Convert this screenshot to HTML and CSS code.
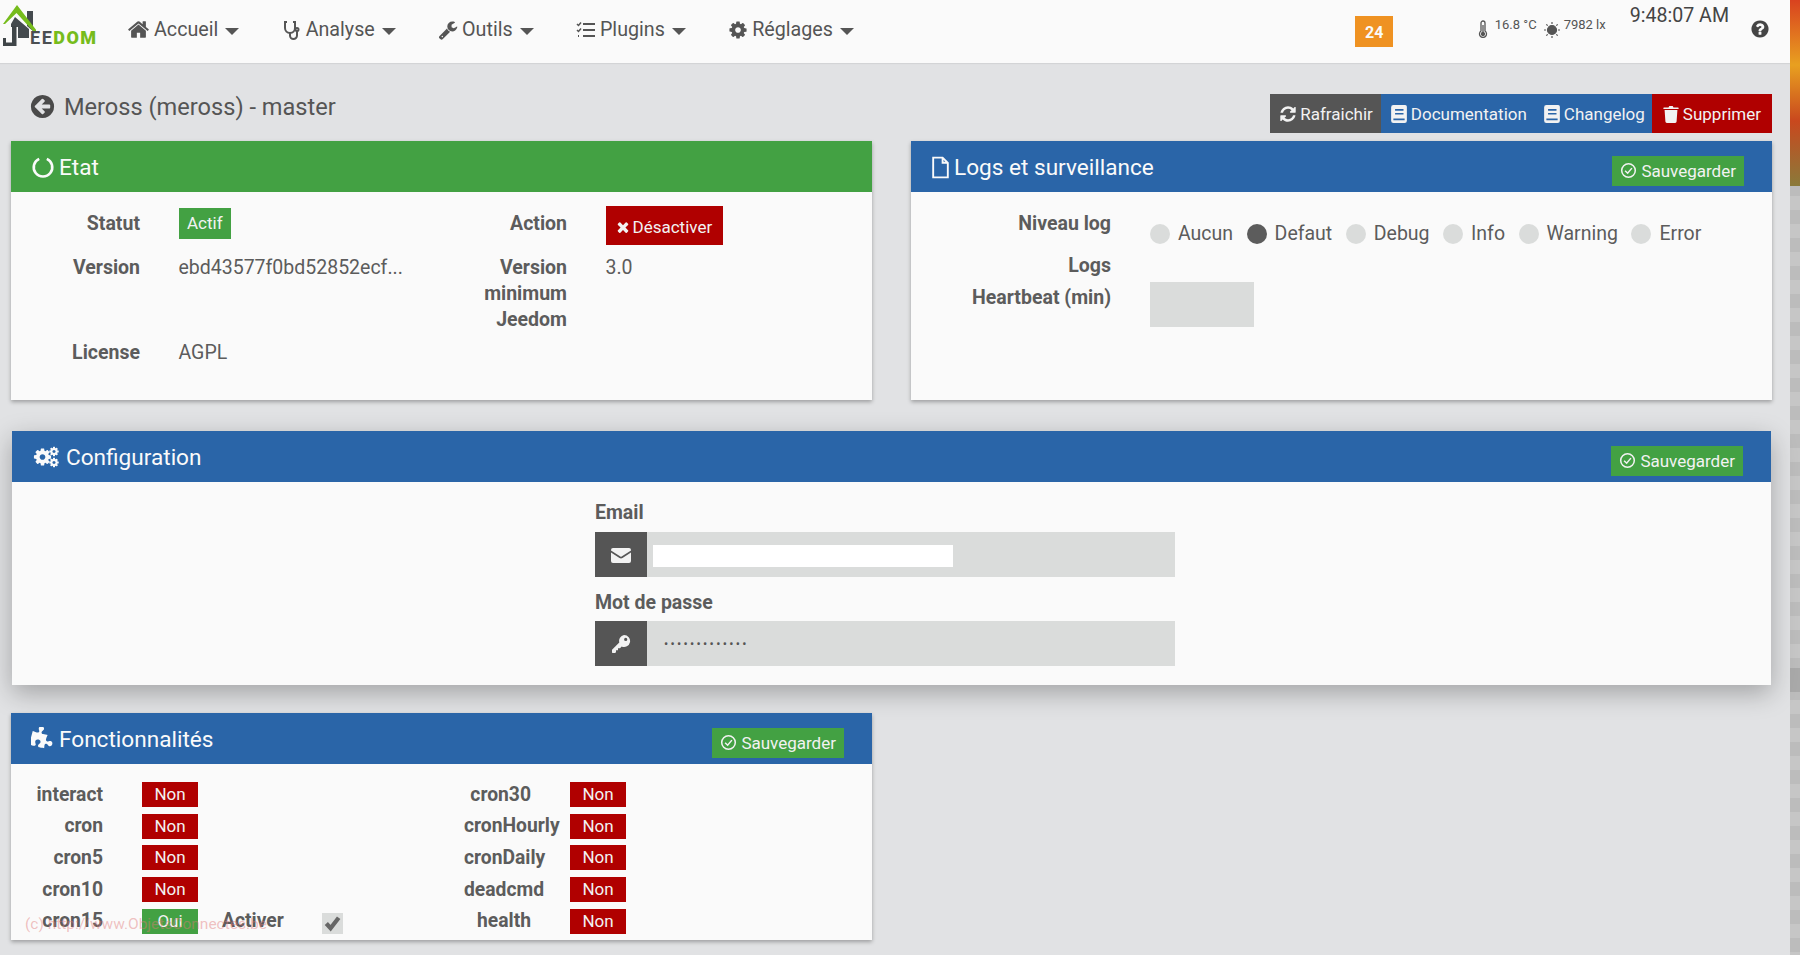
FILE: index.html
```html
<!DOCTYPE html>
<html lang="fr">
<head>
    <meta charset="UTF-8">
    <meta name="viewport" content="width=device-width, initial-scale=1.0">
    <title>Meross - Jeedom</title>
    <link rel="stylesheet" href="styles.css">
</head>
<body>
    <svg class="sprite" xmlns="http://www.w3.org/2000/svg">
        <symbol id="i-home" viewBox="0 0 1792 1792"><path d="M1472 992v480q0 26-19 45t-45 19h-384v-384h-256v384h-384q-26 0-45-19t-19-45v-480q0-1 .5-3t.5-3l575-474 575 474q1 2 1 6zm223-69l-62 74q-8 9-21 11h-3q-13 0-21-7l-692-577-692 577q-12 8-24 7-13-2-21-11l-62-74q-8-10-7-23.500t11-21.500l719-599q32-26 76-26t76 26l244 204v-195q0-14 9-23t23-9h192q14 0 23 9t9 23v408l219 182q10 8 11 21.500t-7 23.500z"/></symbol>
        <symbol id="i-wrench" viewBox="0 0 1792 1792"><path d="M448 1472q0-26-19-45t-45-19-45 19-19 45 19 45 45 19 45-19 19-45zm644-420l-682 682q-37 37-90 37-52 0-91-37l-106-108q-38-36-38-90 0-53 38-91l681-681q39 98 114.500 173.500t173.500 114.500zm634-435q0 39-23 106-47 134-164.500 217.500t-258.500 83.500q-185 0-316.500-131.500t-131.500-316.500 131.500-316.500 316.500-131.500q58 0 121.500 16.500t107.500 46.500q16 11 16 28t-16 28l-293 169v224l193 107q5-3 79-48.500t135.500-81 70.500-35.500q15 0 23.500 10t8.500 25z"/></symbol>
        <symbol id="i-cog" viewBox="0 0 1792 1792"><path d="M1152 896q0-106-75-181t-181-75-181 75-75 181 75 181 181 75 181-75 75-181zm512-109v222q0 12-8 23t-20 13l-185 28q-19 54-39 91 35 50 107 138 10 12 10 25t-9 23q-27 37-99 108t-94 71q-12 0-26-9l-138-108q-44 23-91 38-16 136-29 186-7 28-36 28h-222q-14 0-24.500-8.500t-11.500-21.500l-28-184q-49-16-90-37l-141 107q-10 9-25 9-14 0-25-11-126-114-165-168-7-10-7-23 0-12 8-23 15-21 51-66.500t54-70.500q-27-50-41-99l-183-27q-13-2-21-12.500t-8-23.500v-222q0-12 8-23t19-13l186-28q14-46 39-92-40-57-107-138-10-12-10-24 0-10 9-23 26-36 98.500-107.500t94.500-71.500q13 0 26 10l138 107q44-23 91-38 16-136 29-186 7-28 36-28h222q14 0 24.500 8.500t11.500 21.500l28 184q49 16 90 37l142-107q9-9 24-9 13 0 25 10 129 119 165 170 7 8 7 22 0 12-8 23-15 21-51 66.500t-54 70.500q26 50 41 98l183 28q13 2 21 12.500t8 23.500z"/></symbol>
        <symbol id="i-question" viewBox="0 0 1792 1792"><path d="M1024 1376v-192q0-14-9-23t-23-9h-192q-14 0-23 9t-9 23v192q0 14 9 23t23 9h192q14 0 23-9t9-23zm256-672q0-88-55.500-163t-138.500-116-170-41q-243 0-371 213-15 24 8 42l132 100q7 6 19 6 16 0 25-12 53-68 86-92 34-24 86-24 48 0 85.500 26t37.500 59q0 38-20 61t-68 45q-63 28-115.500 86.500t-52.500 125.500v36q0 14 9 23t23 9h192q14 0 23-9t9-23q0-19 21.500-49.500t54.500-49.500q32-18 49-28.500t46-35 44.500-48 28-60.500 12.500-81zm384 192q0 209-103 385.500t-279.500 279.500-385.500 103-385.500-103-279.500-279.500-103-385.500 103-385.500 279.500-279.500 385.500-103 385.500 103 279.500 279.500 103 385.500z"/></symbol>
        <symbol id="i-back" viewBox="0 0 1792 1792"><path d="M1408 960v-128q0-26-19-45t-45-19h-502l189-189q19-19 19-45t-19-45l-91-91q-18-18-45-18t-45 18l-362 362-91 91q-18 18-18 45t18 45l91 91 362 362q18 18 45 18t45-18l91-91q18-18 18-45t-18-45l-189-189h502q26 0 45-19t19-45zm256-64q0 209-103 385.500t-279.500 279.500-385.500 103-385.500-103-279.500-279.500-103-385.500 103-385.500 279.500-279.500 385.500-103 385.500 103 279.500 279.500 103 385.500z"/></symbol>
        <symbol id="i-refresh" viewBox="0 0 1792 1792"><path d="M1639 1056q0 5-1 7-64 268-268 434.500t-478 166.500q-146 0-282.500-55t-243.500-157l-129 129q-19 19-45 19t-45-19-19-45v-448q0-26 19-45t45-19h448q26 0 45 19t19 45-19 45l-137 137q71 66 161 102t187 36q134 0 250-65t186-179q11-17 53-117 8-23 30-23h192q13 0 22.500 9.500t9.500 22.500zm25-800v448q0 26-19 45t-45 19h-448q-26 0-45-19t-19-45 19-45l138-138q-148-137-349-137-134 0-250 65t-186 179q-11 17-53 117-8 23-30 23h-199q-13 0-22.500-9.500t-9.500-22.500v-7q65-268 270-434.500t480-166.500q146 0 284 55.500t245 156.500l130-129q19-19 45-19t45 19 19 45z"/></symbol>
        <symbol id="i-trash" viewBox="0 0 16 18"><path d="M1 2.500h4.500L6.300 1h3.400l.8 1.500H15a.6.6 0 0 1 .6.600v.9H.4v-.9A.6.6 0 0 1 1 2.500z"/><path d="M1.600 5h12.800l-.8 11.500a1.500 1.500 0 0 1-1.500 1.400H3.900a1.500 1.500 0 0 1-1.500-1.400z"/></symbol>
        <symbol id="i-times" viewBox="0 0 1792 1792"><path d="M1490 1322q0 40-28 68l-136 136q-28 28-68 28t-68-28l-294-294-294 294q-28 28-68 28t-68-28l-136-136q-28-28-28-68t28-68l294-294-294-294q-28-28-28-68t28-68l136-136q28-28 68-28t68 28l294 294 294-294q28-28 68-28t68 28l136 136q28 28 28 68t-28 68l-294 294 294 294q28 28 28 68z"/></symbol>
        <symbol id="i-envelope" viewBox="0 0 20 16"><path d="M0 5.500V14a2 2 0 0 0 2 2h16a2 2 0 0 0 2-2V5.500l-8.500 5.500a3 3 0 0 1-3 0z"/><path d="M0 3a2 2 0 0 1 2-2h16a2 2 0 0 1 2 2v.5L10.600 9.500a1 1 0 0 1-1.200 0L0 3.500z"/></symbol>
        <symbol id="i-key" viewBox="0 0 20 20"><path fill-rule="evenodd" d="M13 1a6 6 0 1 1-2.300 11.500L9 14.200H7v2H5v2l-1 .8H1.500L1 18.500V15.800l7.300-7.300A6 6 0 0 1 13 1zM14.700 3.800a1.600 1.600 0 1 0 0 3.200 1.600 1.600 0 0 0 0-3.200z"/></symbol>
        <symbol id="i-puzzle" viewBox="0 0 1792 1792"><path transform="rotate(15 896 896)" d="M1664 1098q0 81-44.500 135t-123.500 54q-41 0-77.500-17.500t-59-38-56.500-38-71-17.500q-110 0-110 124 0 39 16 115t15 115v5q-22 0-33 1-34 3-97.500 11.500t-115.500 13.500-98 5q-61 0-103-26.500t-42-83.500q0-37 17.500-71t38-56.500 38-59 17.500-77.500q0-79-54-123.500t-135-44.500q-84 0-143 45.500t-59 127.500q0 43 15 83t33.500 64.500 33.500 53 15 50.500q0 45-46 89-37 35-117 35-95 0-245-24-9-2-27.500-4t-27.500-4l-13-2q-1 0-3-1-2 0-2-1v-1024q2 1 17.500 3.500t34 5 21.500 3.500q150 24 245 24 80 0 117-35 46-44 46-89 0-22-15-50.500t-33.500-53-33.500-64.500-15-83q0-82 59-127.500t144-45.500q80 0 134 44.500t54 123.500q0 41-17.500 77.500t-38 59-38 56.500-17.500 71q0 57 42 83.500t103 26.500q64 0 180-15t163-17v2q-1 2-3.500 17.500t-5 34-3.500 21.500q-24 150-24 245 0 80 35 117 44 46 89 46 22 0 50.500-15t53-33.500 64.500-33.500 83-15q82 0 127.500 59t45.500 143z"/></symbol>
        <symbol id="i-book" viewBox="0 0 16 16"><path fill-rule="evenodd" d="M3 0h10.500A1.500 1.500 0 0 1 15 1.500V14a2 2 0 0 1-2 2H3a2 2 0 0 1-2-2V2a2 2 0 0 1 2-2zM4.500 3.500v1.500h7.500V3.500zM4.500 7v1.500h7.500V7zM3 12v1.500h10V12z"/></symbol>
        <symbol id="i-check" viewBox="0 0 20 20"><circle cx="10" cy="10" r="8" fill="none" stroke="currentColor" stroke-width="1.800"/><path d="M6 10.200l3 3 5-6" fill="none" stroke="currentColor" stroke-width="1.800"/></symbol>
    </svg>

    <div class="app">
        <div class="page">
            <header class="topbar">
                <a class="logo">
                    <svg class="logo-house" viewBox="0 0 36 50" width="36" height="50">
                        <path d="M15 16 29 28V37H18V26H11V23z" fill="#444a4e"/>
                        <path d="M27 10h6v20l-6-5z" fill="#444a4e"/>
                        <path d="M12 25h4.500v20H3v-8h3v4.500h6z" fill="#3f4548"/>
                        <path d="M17 4 37 30h-4L16.500 12 5 23H3z" fill="#76bc1c"/>
                    </svg>
                    <span class="logo-text">EE<b>DOM</b></span>
                </a>
                <nav class="menu">
                    <a class="menu-item"><svg class="menu-icon icon-home"><use href="#i-home"/></svg>Accueil<i class="caret"></i></a>
                    <a class="menu-item">
                        <svg class="menu-icon" viewBox="0 0 20 20" fill="none" stroke="currentColor" stroke-width="2">
                            <path d="M5 2H3v6a5 5 0 0 0 10 0V2h-2"/>
                            <path d="M8 13v2.500a3.500 3.500 0 0 0 7 0V11"/>
                            <circle cx="15" cy="9.500" r="1.500"/>
                        </svg>Analyse<i class="caret"></i></a>
                    <a class="menu-item"><svg class="menu-icon"><use href="#i-wrench"/></svg>Outils<i class="caret"></i></a>
                    <a class="menu-item">
                        <svg class="menu-icon" viewBox="0 0 20 20" fill="none" stroke="currentColor">
                            <path d="M1 4l1.500 1.500L5 2.500M1 10l1.500 1.500L5 8.500" stroke-width="1.500"/>
                            <path d="M2 16h2" stroke-width="2" stroke-dasharray="1 1"/>
                            <path d="M7 4h12M7 10h12M7 16h12" stroke-width="2.200"/>
                        </svg>Plugins<i class="caret"></i></a>
                    <a class="menu-item"><svg class="menu-icon"><use href="#i-cog"/></svg>Réglages<i class="caret"></i></a>
                </nav>
                <div class="top-right">
                    <span class="msg-badge">24</span>
                    <div class="weather">
                        <svg class="thermo" viewBox="0 0 10 18" fill="none" stroke="currentColor" stroke-width="1.300">
                            <path d="M3 11V3a2 2 0 0 1 4 0v8a3.500 3.500 0 1 1-4 0z"/>
                            <circle cx="5" cy="14" r="1.500" fill="currentColor"/>
                            <path d="M5 5v8"/>
                        </svg>
                        <span>16.8 °C</span>
                        <svg class="sun" viewBox="0 0 16 16" stroke="currentColor" stroke-width="1.200">
                            <circle cx="8" cy="8" r="4.500" fill="currentColor"/>
                            <path d="M8 0v2M8 14v2M0 8h2M14 8h2M2.300 2.300l1.400 1.400M12.300 12.300l1.400 1.400M2.300 13.700l1.400-1.400M12.300 3.700l1.400-1.400"/>
                        </svg>
                        <span>7982 lx</span>
                    </div>
                    <span class="clock">9:48:07 AM</span>
                    <svg class="help"><use href="#i-question"/></svg>
                </div>
            </header>

            <main class="content">
                <div class="title-row">
                    <h2 class="page-title"><svg class="back-icon"><use href="#i-back"/></svg>Meross (meross) - master</h2>
                    <div class="actions">
                        <a class="btn btn-dark"><svg class="btn-icon"><use href="#i-refresh"/></svg>Rafraichir</a>
                        <a class="btn btn-blue"><svg class="btn-icon"><use href="#i-book"/></svg>Documentation</a>
                        <a class="btn btn-blue"><svg class="btn-icon"><use href="#i-book"/></svg>Changelog</a>
                        <a class="btn btn-red"><svg class="btn-icon"><use href="#i-trash"/></svg>Supprimer</a>
                    </div>
                </div>

                <div class="two-cols">
                    <section class="panel">
                        <div class="panel-head head-green">
                            <h3 class="panel-title">
                                <svg class="head-icon icon-ring" viewBox="0 0 22 22" fill="none" stroke="currentColor" stroke-width="2.400"><path d="M7.500 3.500a8.500 8.500 0 1 0 7 0"/></svg>Etat
                            </h3>
                        </div>
                        <div class="state-grid">
                            <label class="lbl lbl-pad">Statut</label>
                            <div><span class="tag tag-green">Actif</span></div>
                            <label class="lbl lbl-pad">Action</label>
                            <div><a class="disable-btn"><svg class="times"><use href="#i-times"/></svg>Désactiver</a></div>

                            <label class="lbl">Version</label>
                            <div class="val">ebd43577f0bd52852ecf...</div>
                            <label class="lbl">Version minimum Jeedom</label>
                            <div class="val">3.0</div>

                            <label class="lbl">License</label>
                            <div class="val">AGPL</div>
                        </div>
                    </section>

                    <section class="panel">
                        <div class="panel-head head-blue">
                            <h3 class="panel-title">
                                <svg class="head-icon icon-file" viewBox="0 0 18 22" fill="none" stroke="currentColor" stroke-width="1.800"><path d="M2 1.500h9l5 5V20.500H2zM11 1.500v5h5"/></svg>Logs et surveillance
                            </h3>
                            <a class="save-btn"><svg class="save-icon"><use href="#i-check"/></svg>Sauvegarder</a>
                        </div>
                        <div class="logs-body">
                            <div class="logs-row row-level">
                                <label class="lbl logs-lbl">Niveau log</label>
                                <div class="radios">
                                    <span class="radio"><i class="dot"></i>Aucun</span>
                                    <span class="radio"><i class="dot dot-on"></i>Defaut</span>
                                    <span class="radio"><i class="dot"></i>Debug</span>
                                    <span class="radio"><i class="dot"></i>Info</span>
                                    <span class="radio"><i class="dot"></i>Warning</span>
                                    <span class="radio"><i class="dot"></i>Error</span>
                                </div>
                            </div>
                            <div class="logs-row row-logs"><label class="lbl logs-lbl">Logs</label></div>
                            <div class="logs-row">
                                <label class="lbl logs-lbl">Heartbeat (min)</label>
                                <div class="beat-input"></div>
                            </div>
                        </div>
                    </section>
                </div>

                <section class="panel panel-config">
                    <div class="panel-head head-blue">
                        <h3 class="panel-title">
                            <svg class="head-icon cogs" viewBox="0 0 28 22" fill="currentColor">
                                <use href="#i-cog" x="0" y="1" width="20" height="20"/>
                                <use href="#i-cog" x="16" y="0" width="11" height="11"/>
                                <use href="#i-cog" x="16" y="11" width="11" height="11"/>
                            </svg>Configuration
                        </h3>
                        <a class="save-btn"><svg class="save-icon"><use href="#i-check"/></svg>Sauvegarder</a>
                    </div>
                    <form class="config-form">
                        <label class="lbl field-lbl">Email</label>
                        <div class="input-group">
                            <span class="addon"><svg class="addon-icon"><use href="#i-envelope"/></svg></span>
                            <div class="input"><span class="redacted"></span></div>
                        </div>
                        <label class="lbl field-lbl field-lbl-2">Mot de passe</label>
                        <div class="input-group">
                            <span class="addon"><svg class="addon-icon"><use href="#i-key"/></svg></span>
                            <div class="input input-pass">•••••••••••••</div>
                        </div>
                    </form>
                </section>

                <section class="panel panel-features">
                    <div class="panel-head head-blue">
                        <h3 class="panel-title">
                            <svg class="head-icon icon-puzzle"><use href="#i-puzzle"/></svg>Fonctionnalités
                        </h3>
                        <a class="save-btn"><svg class="save-icon"><use href="#i-check"/></svg>Sauvegarder</a>
                    </div>
                    <div class="features">
                        <div class="feat"><label class="lbl feat-lbl">interact</label><span class="flag flag-no">Non</span></div>
                        <div class="feat"><label class="lbl feat-lbl">cron30</label><span class="flag flag-no">Non</span></div>
                        <div class="feat"><label class="lbl feat-lbl">cron</label><span class="flag flag-no">Non</span></div>
                        <div class="feat"><label class="lbl feat-lbl">cronHourly</label><span class="flag flag-no">Non</span></div>
                        <div class="feat"><label class="lbl feat-lbl">cron5</label><span class="flag flag-no">Non</span></div>
                        <div class="feat"><label class="lbl feat-lbl">cronDaily</label><span class="flag flag-no">Non</span></div>
                        <div class="feat"><label class="lbl feat-lbl">cron10</label><span class="flag flag-no">Non</span></div>
                        <div class="feat"><label class="lbl feat-lbl">deadcmd</label><span class="flag flag-no">Non</span></div>
                        <div class="feat">
                            <label class="lbl feat-lbl">cron15</label><span class="flag flag-yes">Oui</span>
                            <label class="lbl enable-lbl">Activer</label>
                            <span class="checkbox"><svg viewBox="0 0 20 20" fill="none" stroke="currentColor" stroke-width="4.500"><path d="M3.500 10l4.500 5L16.500 4"/></svg></span>
                        </div>
                        <div class="feat"><label class="lbl feat-lbl">health</label><span class="flag flag-no">Non</span></div>
                    </div>
                    <span class="watermark">(c) http://www.ObjetsConnectes.be</span>
                </section>
            </main>
        </div>
        <div class="side-strip"><div class="strip-photo"></div></div>
    </div>
</body>
</html>
```

FILE: styles.css
```css
* {
    box-sizing: border-box;
}
body {
    margin: 0;
    height: 955px;
    overflow: hidden;
    font-family: 'Roboto', 'Liberation Sans', sans-serif;
    font-size: 19.500px;
    color: #5c5c5c;
    background-color: #e1e2e4;
}
h2, h3 {
    margin: 0;
    font-weight: 400;
}
.sprite {
    display: none;
}
svg {
    flex-shrink: 0;
}
svg:not([fill]) {
    fill: currentColor;
}
.app {
    display: flex;
    height: 955px;
}
.page {
    flex: 1;
    min-width: 0;
}

/* barre du haut */
.topbar {
    display: flex;
    align-items: center;
    height: 63px;
    background-color: #fafafa;
    box-shadow: 0 1px 1px rgba(0, 0, 0, 0.06);
}
.logo {
    display: flex;
    align-items: flex-start;
    width: 127px;
    height: 63px;
}
.logo-house {
    margin-top: 1px;
}
.logo-text {
    margin: 27px 0 0 -6px;
    font-size: 18px;
    font-weight: 700;
    letter-spacing: 1.500px;
    color: #4b4f52;
}
.logo-text b {
    color: #76bc1c;
}
.menu {
    display: flex;
    gap: 42.300px;
    margin-top: -4px;
}
.menu-item {
    display: flex;
    align-items: center;
    font-size: 19.700px;
    color: #555;
}
.menu-icon {
    width: 20px;
    height: 20px;
    margin-right: 4px;
}
.icon-home {
    width: 23px;
    height: 23px;
}
.caret {
    width: 0;
    height: 0;
    margin: 3px 0 0 7px;
    border-top: 7px solid #555;
    border-left: 7px solid transparent;
    border-right: 7px solid transparent;
}
.top-right {
    display: flex;
    align-items: center;
    margin-left: auto;
    padding-right: 20px;
    height: 63px;
}
.msg-badge {
    width: 38px;
    height: 31px;
    margin-right: 84.500px;
    background-color: #ef9222;
    color: #fafafa;
    font-size: 16px;
    font-weight: 700;
    line-height: 33px;
    text-align: center;
}
.weather {
    display: flex;
    align-items: flex-start;
    height: 63px;
    padding-top: 18px;
    font-size: 13px;
    line-height: 14px;
    color: #555;
}
.thermo {
    width: 10px;
    height: 18px;
    margin: 2px 7px 0 0;
}
.sun {
    width: 16px;
    height: 16px;
    margin: 4px 4px 0 7px;
}
.clock {
    align-self: flex-start;
    margin: 4px 21px 0 24px;
    font-size: 19.600px;
    line-height: 24px;
    color: #444;
}
.help {
    width: 20px;
    height: 20px;
    margin-top: -5px;
    color: #444;
}

/* contenu */
.content {
    padding: 0 18px 0 11px;
}
.title-row {
    display: flex;
    justify-content: space-between;
    align-items: center;
    height: 78px;
    padding: 31px 0 8px 18px;
}
.page-title {
    display: flex;
    align-items: center;
    margin-top: -14px;
    font-size: 23.600px;
    color: #555;
}
.back-icon {
    width: 27px;
    height: 27px;
    margin-right: 8px;
    color: #4a4a4a;
}
.actions {
    display: flex;
    height: 39px;
}
.btn {
    display: flex;
    align-items: center;
    padding: 0 9px;
    font-size: 17px;
    color: #f2f2f2;
}
.btn-dark {
    padding-right: 8px;
    background-color: #555;
}
.btn-blue {
    padding-right: 7px;
    background-color: #2a65a8;
}
.btn-red {
    padding: 0 11px 0 10px;
    background-color: #b00000;
}
.btn-icon {
    width: 18px;
    height: 18px;
    margin-right: 3px;
}
.two-cols {
    display: grid;
    grid-template-columns: 861px 861px;
    column-gap: 39px;
}
.panel {
    position: relative;
    background-color: #fafafa;
    box-shadow: 0 2px 4px rgba(0, 0, 0, 0.3);
}
.panel-head {
    display: flex;
    justify-content: space-between;
    align-items: center;
    height: 51px;
    padding: 0 28px 0 20px;
    color: #fafafa;
}
.head-green {
    background-color: #43a143;
}
.head-blue {
    background-color: #2a65a8;
}
.panel-title {
    display: flex;
    align-items: center;
    padding-top: 1px;
    font-size: 22.600px;
}
.head-icon {
    width: 22px;
    height: 22px;
    margin-right: 5px;
}
.icon-ring {
    width: 24px;
    height: 24px;
    margin-right: 4px;
}
.icon-file {
    width: 19px;
    height: 23px;
    margin-right: 4px;
}
.icon-puzzle {
    width: 24px;
    height: 24px;
    margin-right: 4px;
}
.cogs {
    width: 29px;
}
.save-btn {
    display: flex;
    align-items: center;
    height: 30px;
    padding: 0 8px;
    margin-top: 8px;
    background-color: #43a143;
    font-size: 17px;
    color: #f2f2f2;
}
.save-icon {
    width: 17px;
    height: 17px;
    margin-right: 4px;
}
.lbl {
    display: block;
    font-weight: 700;
    color: #5c5c5c;
    line-height: 26px;
}

/* Etat */
.state-grid {
    display: grid;
    grid-template-columns: 129px 229.500px 120.500px 1fr;
    column-gap: 38.500px;
    row-gap: 7px;
    height: 208px;
    padding-top: 14px;
    align-content: start;
}
.state-grid .lbl {
    text-align: right;
}
.lbl-pad {
    padding-top: 5px;
}
.val {
    line-height: 26px;
}
.tag {
    display: inline-block;
    margin-top: 2px;
    padding: 0 8.500px;
    line-height: 31px;
    font-size: 17px;
    color: #f2f2f2;
}
.tag-green {
    background-color: #43a143;
}
.disable-btn {
    display: inline-flex;
    align-items: center;
    height: 39px;
    margin-bottom: 3px;
    padding: 2px 11px 0 9px;
    background-color: #b00000;
    font-size: 17px;
    color: #f2f2f2;
}
.times {
    width: 16px;
    height: 16px;
    margin-right: 2px;
}

/* Logs */
.logs-body {
    height: 208px;
    padding-top: 19px;
}
.logs-row {
    display: flex;
    align-items: flex-start;
    column-gap: 39px;
}
.logs-lbl {
    width: 200px;
    text-align: right;
}
.row-level {
    height: 41.500px;
}
.row-logs {
    height: 32px;
}
.radios {
    display: flex;
    padding-top: 10px;
    column-gap: 13.500px;
}
.radio {
    display: flex;
    align-items: center;
    line-height: 26px;
}
.dot {
    width: 20px;
    height: 20px;
    margin-right: 8px;
    border-radius: 50%;
    background-color: #dadcdb;
}
.dot-on {
    background-color: #5c5c5c;
}
.beat-input {
    width: 104px;
    height: 45px;
    margin-top: -2.500px;
    background-color: #dadcdb;
}

/* Configuration */
.panel-config {
    width: 1759px;
    height: 254px;
    margin: 31px 0 0 1px;
    box-shadow: 0 8px 24px rgba(0, 0, 0, 0.28);
}
.config-form {
    width: 580px;
    margin-left: 583px;
    padding-top: 18px;
}
.field-lbl {
    line-height: 26px;
    margin-bottom: 6px;
}
.field-lbl-2 {
    margin-top: 13px;
    margin-bottom: 5px;
}
.input-group {
    display: flex;
    height: 45px;
}
.addon {
    display: flex;
    align-items: center;
    justify-content: center;
    width: 52px;
    background-color: #555;
    color: #f2f2f2;
}
.addon-icon {
    width: 20px;
    height: 20px;
}
.input {
    flex: 1;
    padding: 13px 0 0 6px;
    background-color: #dadcdb;
}
.input-pass {
    padding: 10px 0 0 17px;
    font-size: 12.500px;
    line-height: 26px;
    letter-spacing: 2.300px;
    color: #555;
}
.redacted {
    display: block;
    width: 300px;
    height: 22px;
    background-color: #fff;
}

/* Fonctionnalités */
.panel-features {
    width: 861px;
    height: 227px;
    margin-top: 28px;
}
.features {
    display: grid;
    grid-template-columns: 428px 1fr;
    row-gap: 6.700px;
    padding: 18px 0 0 25px;
}
.feat {
    display: flex;
    align-items: center;
    height: 25px;
    font-size: 19.300px;
}
.feat-lbl {
    width: 67px;
    margin-right: 39px;
    text-align: right;
    white-space: nowrap;
}
.flag {
    width: 56px;
    height: 25px;
    font-size: 17px;
    line-height: 25px;
    text-align: center;
    color: #f2f2f2;
}
.flag-no {
    background-color: #b00000;
}
.flag-yes {
    background-color: #43a143;
}
.enable-lbl {
    margin-left: 24px;
}
.checkbox {
    width: 21px;
    height: 21px;
    margin: 4px 0 0 38px;
    padding: 1px;
    background-color: #dadcdb;
    color: #666;
}
.watermark {
    position: absolute;
    left: 14px;
    top: 202px;
    font-size: 15.500px;
    color: rgba(225, 120, 120, 0.45);
    white-space: nowrap;
}

/* bord droit */
.side-strip {
    width: 10px;
    background-color: #c2c2c2;
    background-image:
        linear-gradient(180deg, transparent 668px, #a9a9a9 668px, #a9a9a9 692px, transparent 692px),
        repeating-linear-gradient(180deg, #c6c6c6 0, #c6c6c6 14px, #bcbcbc 14px, #bcbcbc 28px);
}
.strip-photo {
    height: 186px;
    background: linear-gradient(180deg, #d9421f, #e8a020 35%, #c9481e 65%, #8a7a3a);
}
```
